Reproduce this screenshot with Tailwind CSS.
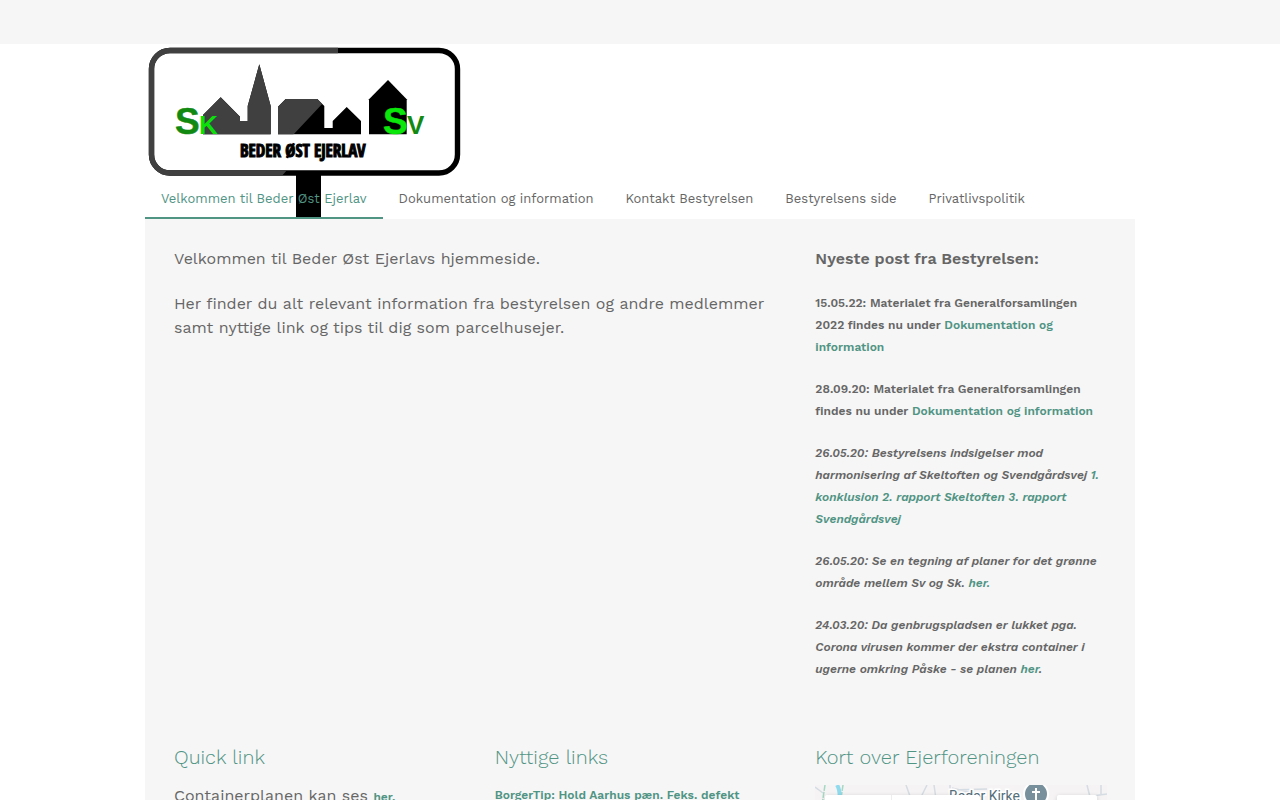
<!DOCTYPE html>
<html lang="da">
<head>
    <meta charset="UTF-8">
    <meta name="viewport" content="width=device-width, initial-scale=1.0">
    <title>Velkommen til Beder Øst Ejerlav</title>
    <script src="https://cdn.jsdelivr.net/npm/@tailwindcss/browser@4"></script>
</head>
<body class="bg-white text-[#666] font-['Work_Sans','Inter',sans-serif] text-base leading-6">
    <!-- Top bar -->
    <div class="h-11 bg-[#f6f6f6]"></div>

    <div class="max-w-[990px] mx-auto">
        <!-- Logo and menu share one grid cell, the menu sits on the bottom edge -->
        <header class="grid">
            <svg class="col-start-1 row-start-1 block w-80 h-[175px]" viewBox="0 0 320 175" role="img" aria-label="Beder Øst Ejerlav">
                <defs>
                    <clipPath id="gloss">
                        <path d="M0 0H193V9L179 58L148 91L143 125L135 134H0Z"/>
                    </clipPath>
                    <g id="sign">
                        <rect x="6.5" y="6.5" width="306" height="122.5" rx="18.5" fill="none" stroke="currentColor" stroke-width="5.4"/>
                        <path fill="currentColor" d="M58 90.3V71L75.7 53.3L95 72.7V77H102.7V62L114.3 20.3L125.7 62V90.3Z"/>
                        <path fill="currentColor" d="M133 90.3V62.7L140.7 55H172.3L179.3 62V84H187.7V77L201.7 63L216 77V90.3Z"/>
                        <path fill="currentColor" d="M224 90.3V55.3L243 36L261.7 55.3V90.3Z"/>
                    </g>
                </defs>
                <rect x="151" y="130" width="25" height="43" fill="#000"/>
                <use href="#sign" class="text-black"/>
                <use href="#sign" class="text-[#404040]" clip-path="url(#gloss)"/>
                <g class="font-['Liberation_Sans',sans-serif] font-bold">
                    <text x="30" y="90" font-size="37" fill="#128a12" stroke="#128a12" stroke-width="0.5">S</text>
                    <text x="54" y="90" font-size="26" fill="#0be00b">K</text>
                    <text x="238" y="90" font-size="37" fill="#0be60b" stroke="#0be60b" stroke-width="0.5">S</text>
                    <text x="262" y="90" font-size="26" fill="#128a12">V</text>
                </g>
                <text x="95" y="113" font-size="17" fill="#000" stroke="#000" class="font-['Open_Sans_Condensed','Roboto_Condensed',sans-serif] font-bold">BEDER ØST EJERLAV</text>
            </svg>
            <nav class="col-start-1 row-start-1 self-end flex text-[13px] leading-5">
                <a href="#" class="px-4 pb-2 border-b-2 border-[#509484] text-[#509484]">Velkommen til Beder Øst Ejerlav</a>
                <a href="#" class="px-4 pb-2 border-b-2 border-transparent">Dokumentation og information</a>
                <a href="#" class="px-4 pb-2 border-b-2 border-transparent">Kontakt Bestyrelsen</a>
                <a href="#" class="px-4 pb-2 border-b-2 border-transparent">Bestyrelsens side</a>
                <a href="#" class="px-4 pb-2 border-b-2 border-transparent">Privatlivspolitik</a>
            </nav>
        </header>

        <main class="bg-[#f6f6f6] pl-[29px] pr-7 pt-7 pb-10">
            <div class="grid grid-cols-3 gap-x-[29px]">
                <div class="col-span-2">
                    <p>Velkommen til Beder Øst Ejerlavs hjemmeside.</p>
                    <p class="mt-[21px]">Her finder du alt relevant information fra bestyrelsen og andre medlemmer samt nyttige link og tips til dig som parcelhusejer.</p>
                </div>

                <!-- News -->
                <div class="font-semibold">
                    <h2>Nyeste post fra Bestyrelsen:</h2>
                    <div class="mt-[21px] space-y-5 text-xs leading-[22px]">
                        <p>15.05.22: Materialet fra Generalforsamlingen 2022 findes nu under <a href="#" class="text-[#509484]">Dokumentation og<br>information</a></p>
                        <p>28.09.20: Materialet fra Generalforsamlingen findes nu under <a href="#" class="text-[#509484]">Dokumentation og information</a></p>
                        <p class="italic">26.05.20: Bestyrelsens indsigelser mod<br>harmonisering af Skeltoften og Svendgårdsvej <a href="#" class="text-[#509484]">1.<br>konklusion</a> <a href="#" class="text-[#509484]">2. rapport Skeltoften</a> <a href="#" class="text-[#509484]">3. rapport<br>Svendgårdsvej</a></p>
                        <p class="italic">26.05.20: Se en tegning af planer for det grønne<br>område mellem Sv og Sk. <a href="#" class="text-[#509484]">her.</a></p>
                        <p class="italic">24.03.20: Da genbrugspladsen er lukket pga.<br>Corona virusen kommer der ekstra container i<br>ugerne omkring Påske - se planen <a href="#" class="text-[#509484]">her</a>.</p>
                    </div>
                </div>
            </div>

            <div class="grid grid-cols-3 gap-x-[29px] mt-[63px]">
                <section>
                    <h2 class="text-xl font-light text-[#509484]">Quick link</h2>
                    <p class="mt-[13px]">Containerplanen kan ses <a href="#" class="text-xs font-semibold text-[#509484]">her.</a></p>
                </section>
                <section>
                    <h2 class="text-xl font-light text-[#509484]">Nyttige links</h2>
                    <p class="mt-[13px] text-xs leading-[22px] font-semibold"><a href="#" class="text-[#509484]">BorgerTip: Hold Aarhus pæn. Feks. defekt</a></p>
                </section>
                <section>
                    <h2 class="text-xl font-light text-[#509484]">Kort over Ejerforeningen</h2>
                    <svg class="mt-[14px] block w-full h-[200px] bg-[#f5f3f3]" role="img" aria-label="Kort">
                        <g fill="none" stroke="#d5dce3" stroke-width="1.5">
                            <path d="M0 2L8 8M91 0L96 14M105 14L112 0M119 0L121 14M135 0V5L172 4M137 3L162 9M272 0L276 16M262 13L292 9M286 0V9"/>
                        </g>
                        <path d="M10 0L7 20M28 0L25 20" fill="none" stroke="#a5d8c4" stroke-width="1.5" stroke-dasharray="6 1"/>
                        <path d="M22 0Q26 6 24 20" fill="none" stroke="#90daee" stroke-width="4"/>
                        <text x="134" y="16" font-size="14" fill="#546e7a" stroke="#fff" stroke-width="3" paint-order="stroke" class="font-['Roboto',sans-serif]">Beder Kirke</text>
                        <circle cx="221" cy="9" r="12" fill="#78909c" stroke="#fff" stroke-width="2"/>
                        <path d="M221 3V16M217 7H225" fill="none" stroke="#fff" stroke-width="2"/>
                        <g fill="#fff" class="drop-shadow-sm">
                            <rect x="10" y="10" width="155" height="40" rx="2"/>
                            <rect x="242" y="10" width="40" height="40" rx="2"/>
                        </g>
                        <path d="M76.5 10V50" stroke="#eee"/>
                    </svg>
                </section>
            </div>
        </main>
    </div>
</body>
</html>
